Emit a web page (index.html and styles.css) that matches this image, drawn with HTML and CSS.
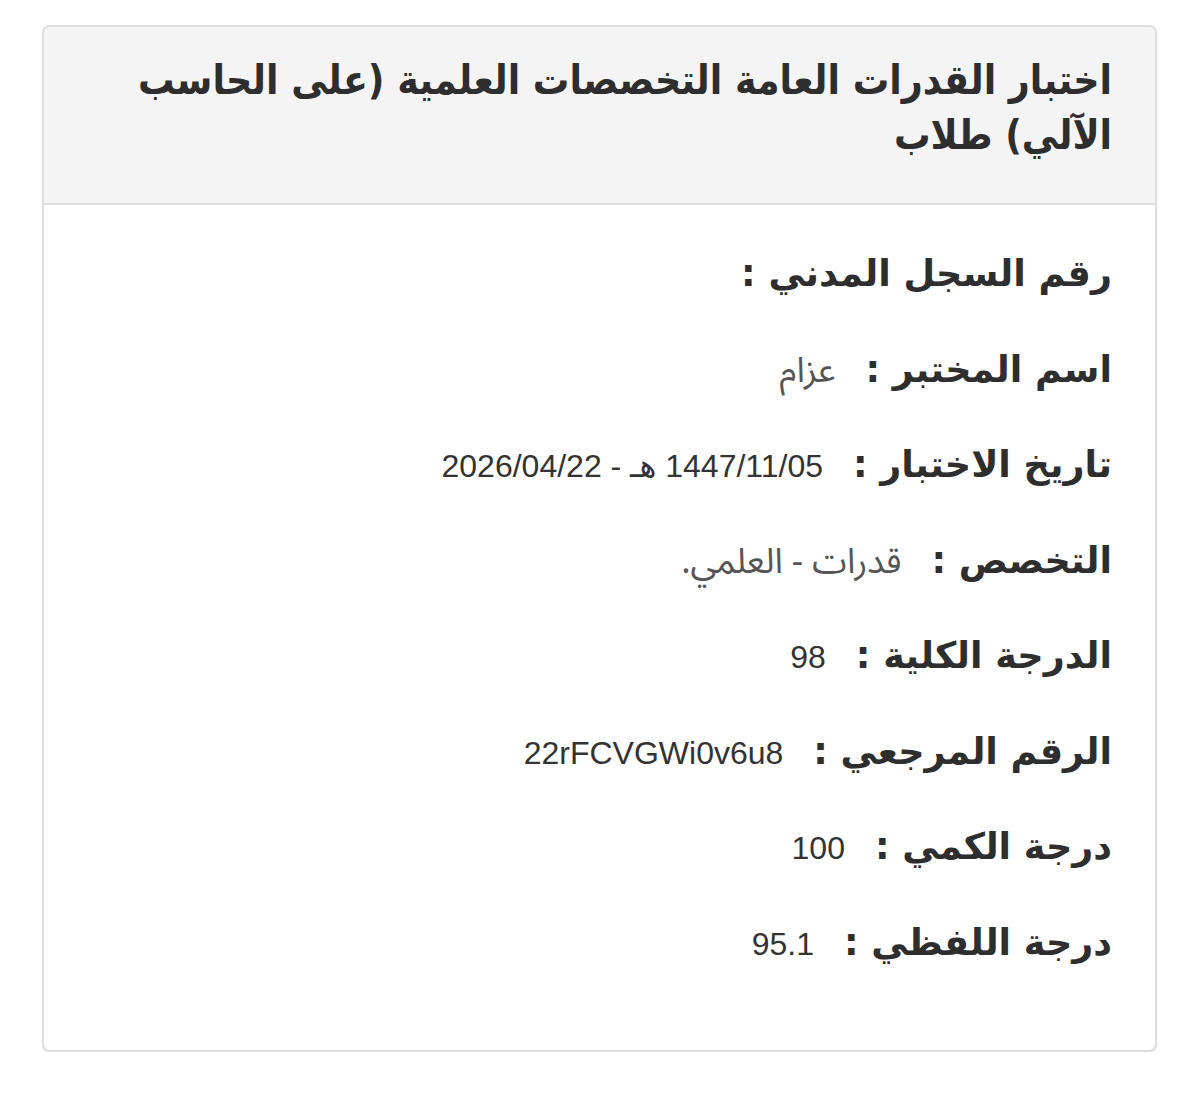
FILE: index.html
```html
<!DOCTYPE html>
<html lang="ar" dir="rtl">
<head>
<meta charset="utf-8">
<title>نتيجة الاختبار</title>
<link rel="stylesheet" href="styles.css">
</head>
<body>
<div class="page">
  <div class="card">
    <div class="card-head">
      <h1 class="title">اختبار القدرات العامة التخصصات العلمية (على الحاسب الآلي) طلاب</h1>
    </div>
    <div class="card-body">
      <div class="row"><span class="label">رقم السجل المدني :</span><span class="value"></span></div>
      <div class="row"><span class="label">اسم المختبر :</span><span class="value ar">عزام</span></div>
      <div class="row"><span class="label">تاريخ الاختبار :</span><span class="value">1447/11/05 هـ - 2026/04/22</span></div>
      <div class="row"><span class="label">التخصص :</span><span class="value ar">قدرات - العلمي.</span></div>
      <div class="row"><span class="label">الدرجة الكلية :</span><span class="value">98</span></div>
      <div class="row"><span class="label">الرقم المرجعي :</span><span class="value">22rFCVGWi0v6u8</span></div>
      <div class="row"><span class="label">درجة الكمي :</span><span class="value">100</span></div>
      <div class="row"><span class="label">درجة اللفظي :</span><span class="value">95.1</span></div>
    </div>
  </div>
</div>
</body>
</html>
```

FILE: styles.css
```css
html, body {
  margin: 0;
  padding: 0;
  background: #ffffff;
}

body {
  font-family: "DejaVu Sans", sans-serif;
  color: #333333;
}

.page {
  padding: 25px 43px 0 42px;
}

.card {
  border: 2px solid #dedede;
  border-radius: 8px;
  overflow: hidden;
  box-shadow: 0 1px 2px rgba(0, 0, 0, 0.08);
  background: #ffffff;
}

.card-head {
  background: #f4f4f4;
  border-bottom: 2px solid #dedede;
  padding: 26px 43px 40px 43px;
}

.title {
  margin: 0;
  font-family: "DejaVu Sans Condensed", "DejaVu Sans", sans-serif;
  font-weight: bold;
  font-size: 40.5px;
  line-height: 55px;
  color: #2e2e2e;
}

.card-body {
  padding: 21px 43px 60px 43px;
}

.row {
  display: flex;
  align-items: baseline;
  gap: 30px;
  height: 95.5px;
  line-height: 95.5px;
}

.label {
  font-family: "DejaVu Sans", sans-serif;
  font-weight: bold;
  font-size: 36.5px;
  color: #2e2e2e;
}

.value {
  font-family: "Liberation Sans", "DejaVu Sans", sans-serif;
  font-size: 32px;
  color: #333333;
}

.value.ar {
  font-family: "Noto Sans Arabic", "Noto Sans", "DejaVu Sans", sans-serif;
  font-size: 35px;
  color: #555555;
}
```
